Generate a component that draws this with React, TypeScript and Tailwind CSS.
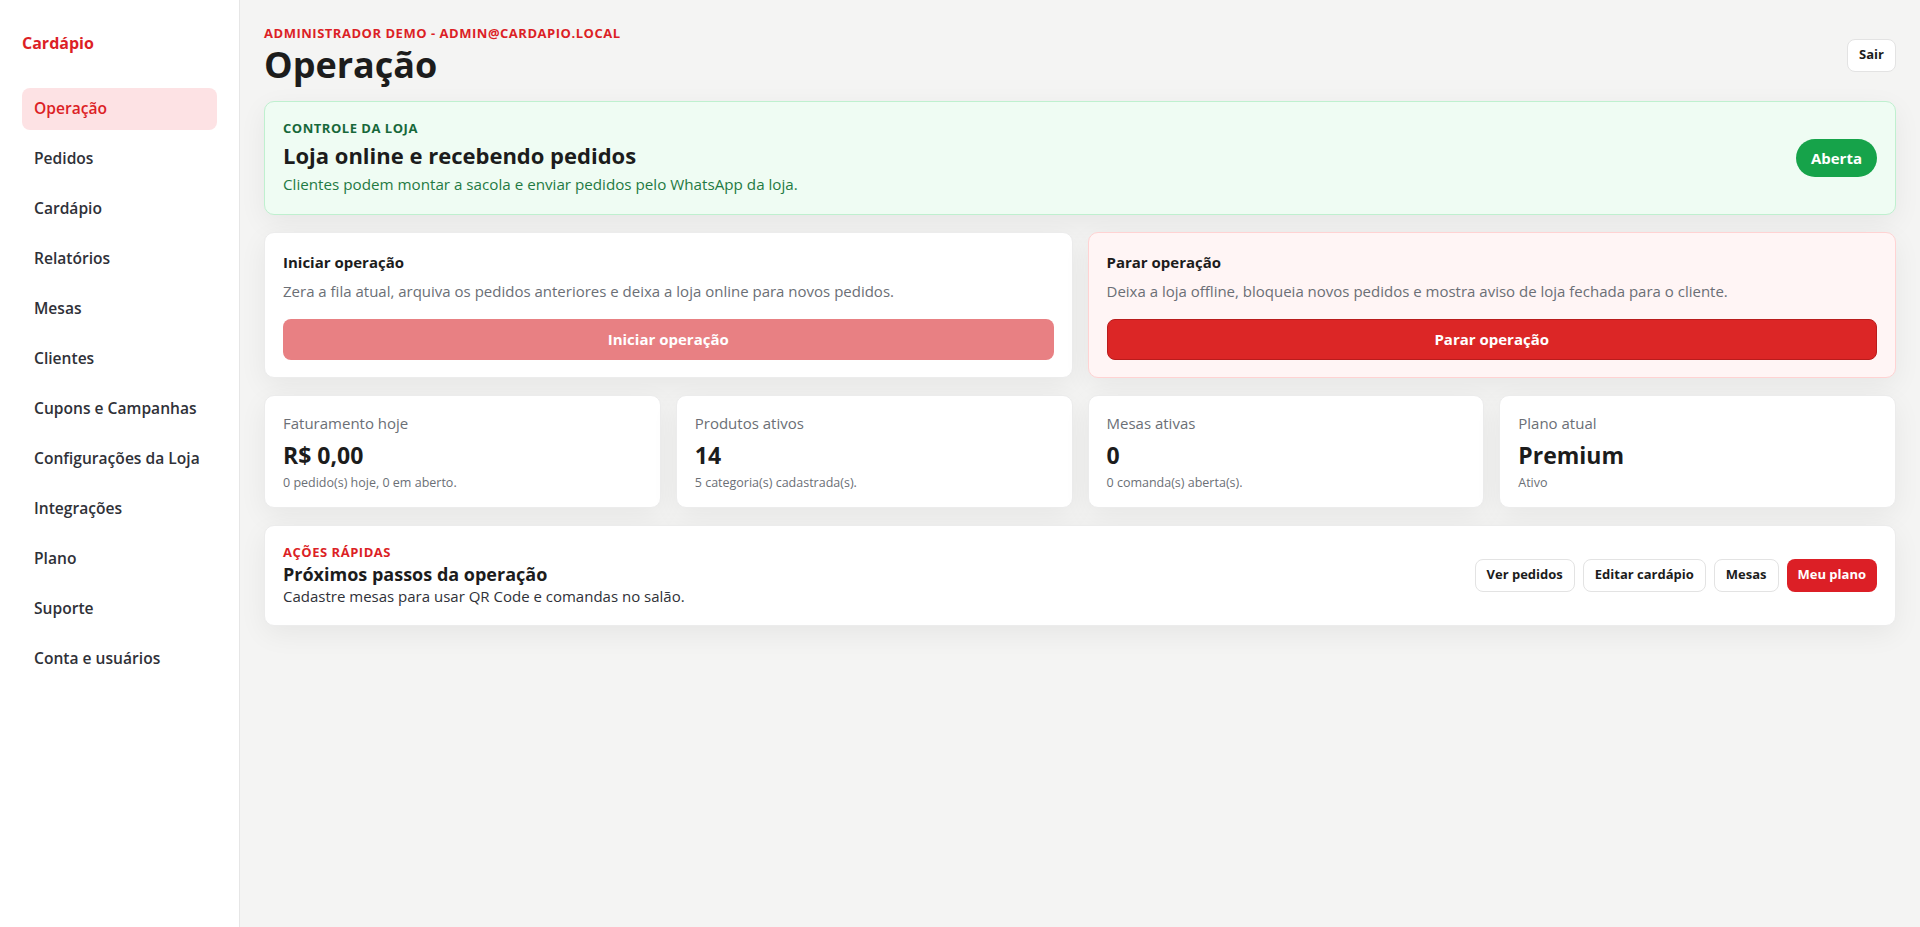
import React from "react";

const navItems = [
  "Operação",
  "Pedidos",
  "Cardápio",
  "Relatórios",
  "Mesas",
  "Clientes",
  "Cupons e Campanhas",
  "Configurações da Loja",
  "Integrações",
  "Plano",
  "Suporte",
  "Conta e usuários",
];

const stats = [
  { label: "Faturamento hoje", value: "R$ 0,00", note: "0 pedido(s) hoje, 0 em aberto." },
  { label: "Produtos ativos", value: "14", note: "5 categoria(s) cadastrada(s)." },
  { label: "Mesas ativas", value: "0", note: "0 comanda(s) aberta(s)." },
  { label: "Plano atual", value: "Premium", note: "Ativo" },
];

function Sidebar() {
  return (
    <aside className="w-[240px] shrink-0 min-h-screen bg-white border-r border-[#e6e6e6] px-[22px]">
      <div className="h-[88px] pt-[31px]">
        <span className="text-[16px] leading-[22px] font-bold text-[#dc1f26]">Cardápio</span>
      </div>
      <nav className="flex flex-col gap-[8px]">
        {navItems.map((item, i) => (
          <a
            key={item}
            className={
              i === 0
                ? "h-[42px] flex items-center px-[12px] rounded-[8px] bg-[#fde2e4] text-[#dc1f26] text-[15.6px] font-semibold"
                : "h-[42px] flex items-center px-[12px] rounded-[8px] text-[#2f3138] text-[15.6px] font-semibold"
            }
          >
            {item}
          </a>
        ))}
      </nav>
    </aside>
  );
}

function Header() {
  return (
    <header className="flex items-center justify-between">
      <div>
        <p className="text-[13px] leading-[16px] font-bold uppercase tracking-[0.04em] text-[#dc1f26]">
          Administrador Demo - admin@cardapio.local
        </p>
        <h1 className="mt-[4px] text-[36px] leading-[40px] font-bold text-[#1c1c1c]">Operação</h1>
      </div>
      <button className="h-[33px] px-[11px] rounded-[8px] bg-white border border-[#e3e3e3] text-[13px] font-bold text-[#1c1c1c]">
        Sair
      </button>
    </header>
  );
}

function StoreControl() {
  return (
    <section className="flex items-center justify-between rounded-[10px] border border-[#bff0cf] bg-[#effcf3] px-[18px] py-[18px] shadow-[0_8px_28px_rgba(0,0,0,0.06)]">
      <div>
        <p className="text-[13px] leading-[16px] font-bold uppercase tracking-[0.04em] text-[#17683a]">
          Controle da loja
        </p>
        <h2 className="mt-[4px] text-[22px] leading-[30px] font-bold text-[#1c1c1c]">
          Loja online e recebendo pedidos
        </h2>
        <p className="mt-[2px] text-[15.2px] leading-[24px] text-[#1f7a43]">
          Clientes podem montar a sacola e enviar pedidos pelo WhatsApp da loja.
        </p>
      </div>
      <span className="h-[38px] px-[15px] flex items-center rounded-full bg-[#16a34a] text-white text-[15px] font-bold">
        Aberta
      </span>
    </section>
  );
}

function ActionCard({
  title,
  text,
  action,
  danger,
}: {
  title: string;
  text: string;
  action: string;
  danger?: boolean;
}) {
  return (
    <section
      className={
        danger
          ? "rounded-[10px] border border-[#ffd3d3] bg-[#fff5f5] px-[18px] pt-[18px] pb-[17px] shadow-[0_8px_28px_rgba(0,0,0,0.06)]"
          : "rounded-[10px] border border-[#ececec] bg-white px-[18px] pt-[18px] pb-[17px] shadow-[0_8px_28px_rgba(0,0,0,0.06)]"
      }
    >
      <h3 className="text-[15px] leading-[22px] font-bold text-[#1c1c1c]">{title}</h3>
      <p className="mt-[6px] text-[15px] leading-[24px] text-[#6b6f76]">{text}</p>
      <button
        className={
          danger
            ? "mt-[16px] w-full h-[41px] rounded-[8px] bg-[#dc2626] border border-[#b91c1c] text-white text-[15px] font-bold"
            : "mt-[16px] w-full h-[41px] rounded-[8px] bg-[#e88083] text-white text-[15px] font-bold"
        }
      >
        {action}
      </button>
    </section>
  );
}

function StatCard({ label, value, note }: { label: string; value: string; note: string }) {
  return (
    <section className="rounded-[10px] border border-[#ececec] bg-white px-[18px] pt-[18px] pb-[16px] shadow-[0_8px_28px_rgba(0,0,0,0.06)]">
      <p className="text-[15px] leading-[18px] text-[#6b6f76]">{label}</p>
      <p className="mt-[9px] text-[23px] leading-[28px] font-bold text-[#1c1c1c]">{value}</p>
      <p className="mt-[6px] text-[12.5px] leading-[16px] text-[#6b6f76]">{note}</p>
    </section>
  );
}

function QuickActions() {
  return (
    <section className="flex items-center justify-between rounded-[10px] border border-[#ececec] bg-white px-[18px] pt-[18px] pb-[19px] shadow-[0_8px_28px_rgba(0,0,0,0.06)]">
      <div>
        <p className="text-[13px] leading-[16px] font-bold uppercase tracking-[0.04em] text-[#dc1f26]">
          Ações rápidas
        </p>
        <h2 className="mt-[2px] text-[18px] leading-[24px] font-bold text-[#1c1c1c]">
          Próximos passos da operação
        </h2>
        <p className="text-[15px] leading-[20px] text-[#2f3138]">
          Cadastre mesas para usar QR Code e comandas no salão.
        </p>
      </div>
      <div className="flex items-center gap-[8px]">
        {["Ver pedidos", "Editar cardápio", "Mesas"].map((b) => (
          <button
            key={b}
            className="h-[33px] px-[11px] rounded-[8px] bg-white border border-[#e3e3e3] text-[13px] font-bold text-[#1c1c1c]"
          >
            {b}
          </button>
        ))}
        <button className="h-[33px] px-[11px] rounded-[8px] bg-[#dc1f26] text-[13px] font-bold text-white">
          Meu plano
        </button>
      </div>
    </section>
  );
}

export default function App() {
  return (
    <div
      className="flex min-h-screen bg-[#f4f4f3]"
      style={{ fontFamily: '"Open Sans", "Noto Sans", Arial, sans-serif' }}
    >
      <Sidebar />
      <main className="flex-1 px-[24px] pt-[25px] pb-[24px]">
        <Header />
        <div className="mt-[16px] flex flex-col gap-[17px]">
          <StoreControl />
          <div className="grid grid-cols-2 gap-[15px]">
            <ActionCard
              title="Iniciar operação"
              text="Zera a fila atual, arquiva os pedidos anteriores e deixa a loja online para novos pedidos."
              action="Iniciar operação"
            />
            <ActionCard
              title="Parar operação"
              text="Deixa a loja offline, bloqueia novos pedidos e mostra aviso de loja fechada para o cliente."
              action="Parar operação"
              danger
            />
          </div>
          <div className="grid grid-cols-4 gap-[15px]">
            {stats.map((s) => (
              <StatCard key={s.label} {...s} />
            ))}
          </div>
          <QuickActions />
        </div>
      </main>
    </div>
  );
}
